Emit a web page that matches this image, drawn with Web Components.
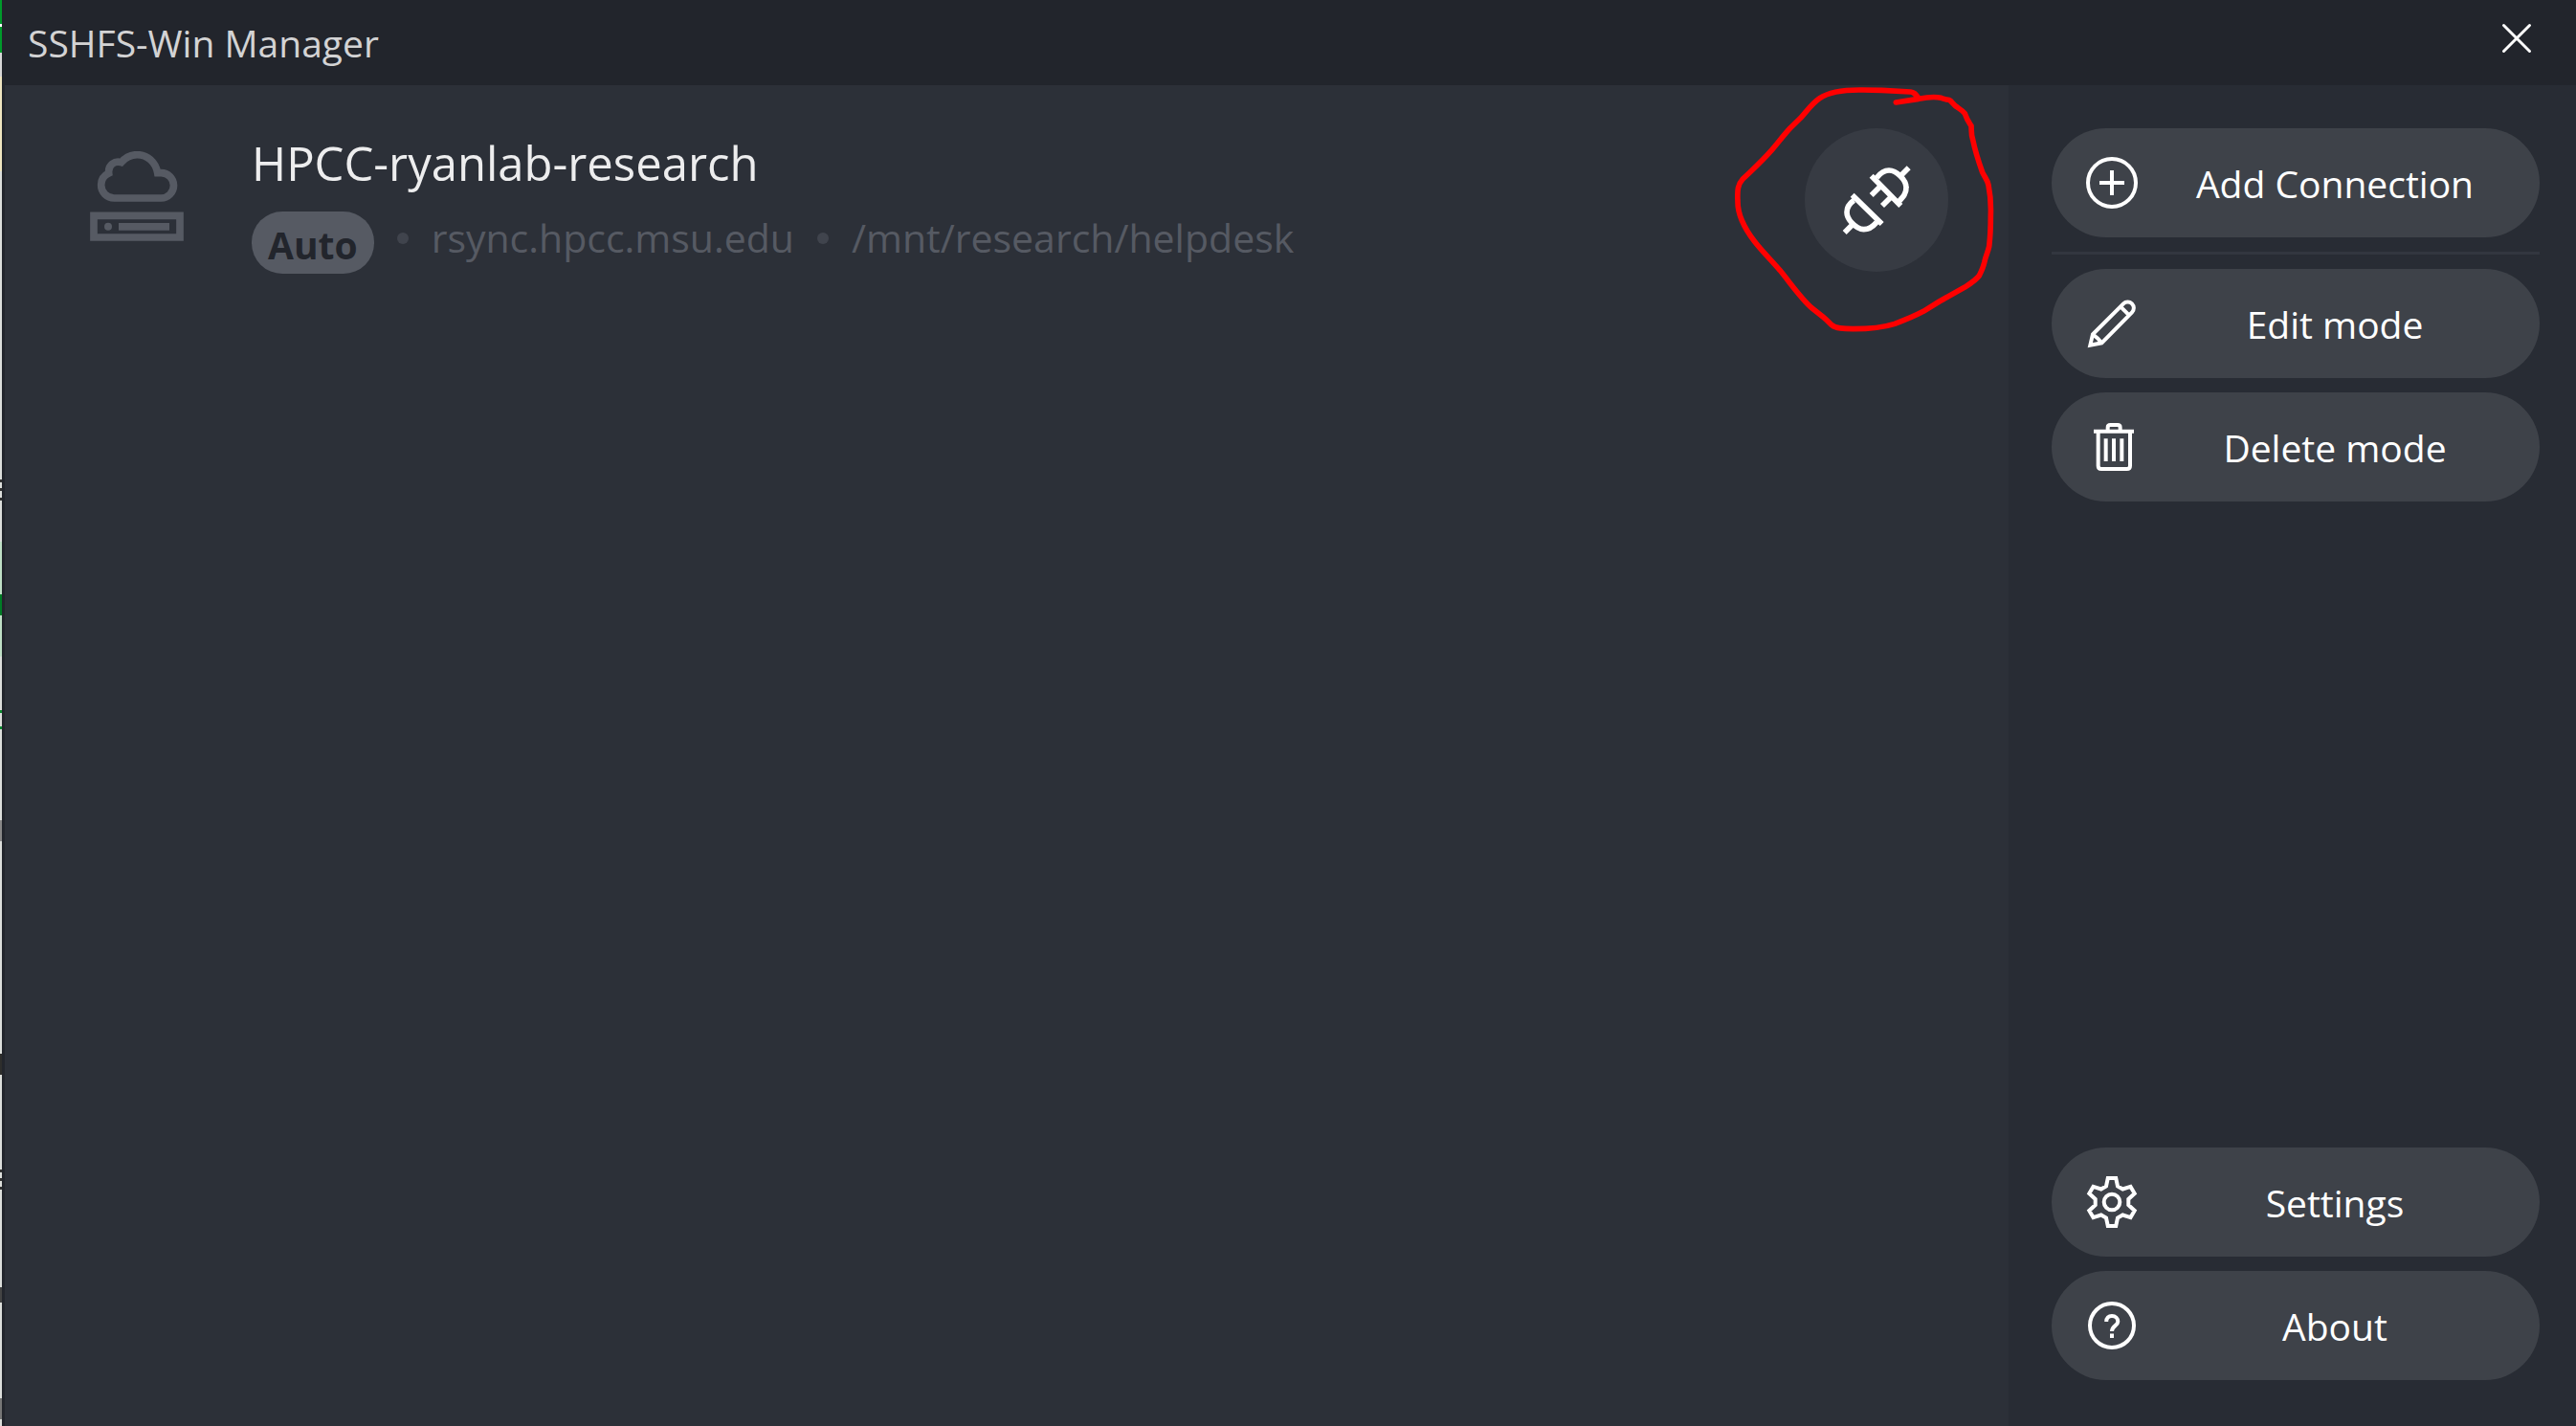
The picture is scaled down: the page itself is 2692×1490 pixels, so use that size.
<!DOCTYPE html>
<html lang="en">
<head>
<meta charset="utf-8">
<title>SSHFS-Win Manager</title>
<style>
  html, body { margin: 0; height: 100%; overflow: hidden; }
  body { font-family: "Open Sans", "Noto Sans", sans-serif; background: #22252c; color: #fff; }
</style>
</head>
<body>
<app-window heading="SSHFS-Win Manager">
  <connection-row slot="main" name="HPCC-ryanlab-research" host="rsync.hpcc.msu.edu" path="/mnt/research/helpdesk" mode="Auto"></connection-row>
  <side-button slot="top" icon="add">Add Connection</side-button>
  <side-divider slot="top"></side-divider>
  <side-button slot="top" icon="edit">Edit mode</side-button>
  <side-button slot="top" icon="trash">Delete mode</side-button>
  <side-button slot="bottom" icon="gear">Settings</side-button>
  <side-button slot="bottom" icon="help">About</side-button>
</app-window>

<script>
const ICONS = {
  add: `<svg viewBox="-30 -30 60 60"><circle r="25"/><path d="M-13 0H13M0-13V13"/></svg>`,
  edit: `<svg viewBox="21 24 180 180" stroke-width="12"><path d="M43 182L51 148L147 52A19 19 0 0 1 174 79L79 175ZM138 61L165 88M51 148Q66 158 79 175"/></svg>`,
  trash: `<svg viewBox="21 411 180 180"><path stroke-width="12" d="M54 452H180M68 452V560Q68 570 78 570H158Q168 570 168 560V452M92 475V546M117 475V546M142 475V546"/><path stroke-width="12" d="M98 450V440Q98 432 106 432H129Q137 432 137 440V450"/></svg>`,
  gear: `<svg viewBox="-30 -30 60 60"><path d="M-4.2-25H4.2L6-16.5L11.3-13.5L19.5-16.1L23.7-8.9L17.3-3.1V3.1L23.7 8.9L19.5 16.1L11.3 13.5L6 16.5L4.2 25H-4.2L-6 16.5L-11.3 13.5L-19.5 16.1L-23.7 8.9L-17.3 3.1V-3.1L-23.7-8.9L-19.5-16.1L-11.3-13.5L-6-16.5Z"/><circle r="8.3"/></svg>`,
  help: `<svg viewBox="-30 -30 60 60"><circle r="23"/><path d="M-5.8-4C-5.8-8-3.4-10 0-10C3.6-10 6.3-7.6 6.3-4C6.3 0 0 .5 0 6M0 8.5V13"/></svg>`
};

class AppWindow extends HTMLElement {
  constructor() {
    super();
    this.attachShadow({ mode: "open" }).innerHTML = `
    <style>
      :host { display: flex; height: 100vh; }
      .desktop {
        flex: none; width: 2px;
        background: linear-gradient(#009a2b 25px, #fff 25px 28px, #009a2b 28px 55px, #d8d8d8 55px 80px, #efe5c0 80px 179px,
          #dcdedb 179px 501px, #333 501px 504px, #dcdedb 504px 510px, #333 510px 513px, #dcdedb 513px 520px, #333 520px 523px,
          #dcdedb 523px 566px, #bfe0c6 566px 621px, #007d26 621px 643px, #bfe0c6 643px 686px, #dcdedb 686px 742px,
          #0b8a30 742px 745px, #dcdedb 745px 759px, #0b8a30 759px 762px, #dcdedb 762px 857px, #888 857px 879px,
          #dcdedb 879px 1101px, #2e2e2c 1101px 1123px, #dcdedb 1123px 1222px, #333 1222px 1225px, #dcdedb 1225px 1231px,
          #333 1231px 1234px, #dcdedb 1234px 1240px, #333 1240px 1243px, #dcdedb 1243px 1345px, #444 1345px 1361px,
          #dcdedb 1361px 1461px, #777 1461px 1483px, #dcdedb 1483px);
      }
      .window { flex: 1; min-width: 0; display: flex; flex-direction: column; background: #22252c; }
      header { display: flex; justify-content: space-between; height: 89px; padding: 0 40px 0 27px; box-sizing: border-box; }
      h1 { margin: 0; font-size: 39px; line-height: 90px; font-weight: 400; color: #d3d3d4; }
      header button { width: 44px; height: 80px; padding: 0; border: 0; background: none; }
      header svg { display: block; width: 44px; height: 44px; margin: auto; stroke: #fff; stroke-width: 3; stroke-linecap: round; }
      .body { flex: 1; min-height: 0; display: flex; padding-left: 3px; }
      main { flex: 1; min-width: 0; background: #2c3038; padding: 45px 63px 0 89px; }
      aside {
        flex: none; width: 593px; box-sizing: border-box; padding: 45px 38px 48px 45px; background: #282c34;
        display: flex; flex-direction: column; justify-content: space-between;
      }
      .group { display: flex; flex-direction: column; gap: 15px; }
    </style>
    <div class="desktop"></div>
    <div class="window">
      <header>
        <h1></h1>
        <button type="button" aria-label="Close"><svg viewBox="-22 -22 44 44"><path d="M-13.5-13.5L13.5 13.5M13.5-13.5L-13.5 13.5"/></svg></button>
      </header>
      <div class="body">
        <main><slot name="main"></slot></main>
        <aside>
          <div class="group"><slot name="top"></slot></div>
          <div class="group"><slot name="bottom"></slot></div>
        </aside>
      </div>
    </div>`;
    this.shadowRoot.querySelector("h1").textContent = this.getAttribute("heading");
  }
}

class ConnectionRow extends HTMLElement {
  constructor() {
    super();
    this.attachShadow({ mode: "open" }).innerHTML = `
    <style>
      :host { display: flex; align-items: flex-start; }
      .drive { flex: none; width: 98px; height: 94px; margin: 24px 71px 0 0; }
      .info { flex: 1; min-width: 0; }
      h2 { margin: 0 0 15px; font-size: 49px; line-height: 72px; font-weight: 400; color: #ededee; }
      .meta { display: flex; align-items: flex-start; font-size: 41px; line-height: 54px; color: #565a63; }
      .badge {
        padding: 4px 17px 0; border-radius: 32px; background: #565a63; color: #22252c;
        font-size: 39px; line-height: 61px; font-weight: 700;
      }
      .dot { flex: none; width: 12px; height: 12px; margin: 22px 24px 0; border-radius: 50%; background: #40444d; }
      .connect { position: relative; flex: none; width: 150px; height: 150px; }
      button { display: block; width: 150px; height: 150px; padding: 0; border: 0; border-radius: 50%; background: #373b43; }
      button svg { display: block; width: 150px; height: 150px; fill: none; stroke: #fff; stroke-width: 17; }
      .ink { position: absolute; left: -106px; top: -64px; width: 340px; height: 300px; pointer-events: none; }
    </style>
    <svg class="drive" viewBox="282 474 294 282" fill="none" stroke="#565a63" stroke-width="23">
      <path d="M358 621H505A39.5 39.5 0 0 0 505 542H494C488 508 462 485 430 485C410 485 393 494 380 509C360 503 338 516 341 543C326 550 317 564 317 580A41 41 0 0 0 358 621Z"/>
      <path d="M294 676H564V744H294Z"/>
      <circle cx="339" cy="710" r="12" fill="#565a63" stroke="none"/>
      <path d="M372 710.5H531"/>
    </svg>
    <div class="info">
      <h2></h2>
      <div class="meta">
        <span class="badge"></span><span class="dot"></span><span class="host"></span><span class="dot"></span><span class="path"></span>
      </div>
    </div>
    <div class="connect">
      <button type="button" aria-label="Connect">
        <svg viewBox="-42 -48 450 450">
          <path d="M107 161L200 252M112 178C95 190 90 203 90 215C90 227 96 238 105 248C118 262 130 269 143 269C160 269 172 260 183 247M83 279L106 256"/>
          <path d="M167 101L259 195M184 107C195 92 208 84 222 84C236 84 248 92 258 102C270 114 276 125 276 137C277 155 268 166 251 184M167 162L195 134M201 195L229 167M284 76L261 99"/>
        </svg>
      </button>
      <svg class="ink" viewBox="0 0 1020 900" fill="none" stroke="#f00" stroke-width="17" stroke-linecap="round" stroke-linejoin="round">
        <path d="M604 111L675 100C700 95 730 93 745 97C757 103 768 101 774 105L790 122C804 132 813 136 820 146C827 167 831 171 840 184C841 195 839 210 845 228C852 262 866 305 875 330C885 350 891 355 894 370C900 400 902 440 901 465C901 500 900 530 896 563C891 585 886 588 881 613C877 630 869 646 865 654C855 668 842 676 820 690L740 735L690 766C660 782 630 794 600 805C560 818 510 821 470 821C440 821 415 820 403 809C395 803 390 795 375 783L340 755C310 730 275 680 240 637C210 602 180 573 160 546C125 500 107 460 108 420C106 385 109 367 123 352C155 321 180 300 215 260C240 230 255 210 272 192L305 160C325 138 340 115 365 98C400 74 450 71 500 72L560 73L650 78C660 79 664 84 672 94"/>
      </svg>
    </div>`;
    const put = (sel, attr) => { this.shadowRoot.querySelector(sel).textContent = this.getAttribute(attr); };
    put("h2", "name"); put(".badge", "mode"); put(".host", "host"); put(".path", "path");
  }
}

class SideButton extends HTMLElement {
  constructor() {
    super();
    this.attachShadow({ mode: "open" }).innerHTML = `
    <style>
      :host { display: block; }
      button {
        display: flex; align-items: center; gap: 15px; width: 100%; height: 114px; padding: 0 26px 0 33px;
        border: 0; border-radius: 57px; background: #3e4249; color: #fff; font: inherit; font-size: 39px; line-height: 54px;
      }
      svg { flex: none; display: block; width: 60px; height: 60px; fill: none; stroke: #fff; stroke-width: 4; overflow: visible; }
      svg[stroke-width], path[stroke-width] { stroke-width: 12; }
      span { flex: 1; text-align: center; white-space: nowrap; padding-top: 2px; }
    </style>
    <button type="button">${ICONS[this.getAttribute("icon")]}<span><slot></slot></span></button>`;
  }
}

class SideDivider extends HTMLElement {
  constructor() {
    super();
    this.attachShadow({ mode: "open" }).innerHTML = `<style>:host { display: block; height: 3px; background: #32363f; }</style>`;
  }
}

customElements.define("side-divider", SideDivider);
customElements.define("side-button", SideButton);
customElements.define("connection-row", ConnectionRow);
customElements.define("app-window", AppWindow);
</script>
</body>
</html>
